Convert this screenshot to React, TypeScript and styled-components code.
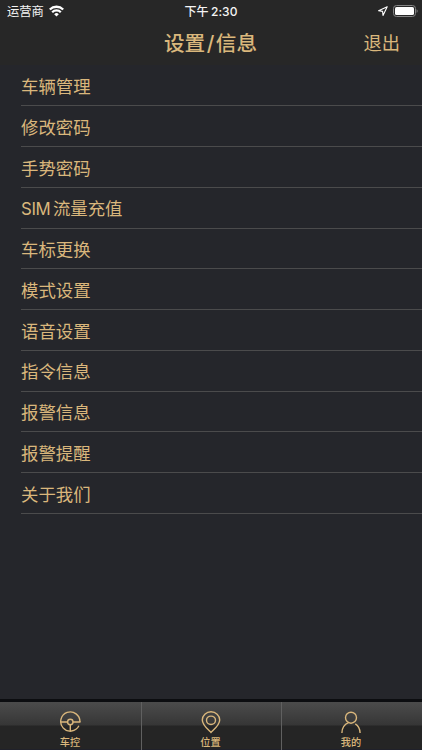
import React from "react";
import styled, { createGlobalStyle } from "styled-components";

const GOLD = "#dab77c";

const GlobalStyle = createGlobalStyle`
  * { box-sizing: border-box; }
  html, body { margin: 0; background: #242529; }
  body { font-family: Inter, "Noto Sans CJK SC", sans-serif; }
`;

const Screen = styled.div`
  width: 422px;
  height: 750px;
  display: flex;
  flex-direction: column;
  overflow: hidden;
  background: #25262b;
  color: ${GOLD};
`;

const StatusBar = styled.div`
  height: 22px;
  flex: none;
  display: grid;
  grid-template-columns: 1fr auto 1fr;
  align-items: center;
  padding: 1px 4px 0 7px;
  background: #272727;
  color: #f4f4f4;
  font-size: 12.3px;
  line-height: 21px;
  white-space: nowrap;
`;

const StatusSide = styled.div<{ $end?: boolean }>`
  display: flex;
  align-items: center;
  justify-content: ${(p) => (p.$end ? "flex-end" : "flex-start")};
  gap: 5px;

  svg { margin-bottom: 1px; }
`;

const Clock = styled.div`
  margin-right: 3px;
  font-weight: 500;
  font-size: 12px;
  letter-spacing: 0.1px;
  word-spacing: -1px;
`;

const NavBar = styled.header`
  height: 43px;
  flex: none;
  display: grid;
  grid-template-columns: 1fr auto 1fr;
  align-items: center;
  padding-right: 22px;
  background: #272727;
`;

const Title = styled.h1`
  grid-column: 2;
  margin: 0 0 0 21px;
  font-size: 20.6px;
  line-height: 43px;
  font-weight: 500;
`;

const Slash = styled.span`
  padding: 0 1.5px;
`;

const LogoutButton = styled.button`
  justify-self: end;
  padding: 0;
  border: 0;
  background: none;
  color: inherit;
  font: 400 18.3px/43px Inter, "Noto Sans CJK SC", sans-serif;
`;

const Menu = styled.ul`
  flex: 1;
  margin: 0;
  padding: 0.7px 0 0 21px;
  list-style: none;
`;

const MenuItem = styled.li`
  height: 40.75px;
  display: flex;
  align-items: center;
  padding-top: 3px;
  border-bottom: 1px solid #4b4b4c;
  font-size: 17.4px;
  line-height: 24px;
`;

const Latin = styled.span`
  margin-right: 2.5px;
  font-size: 16.8px;
  letter-spacing: -0.35px;
`;

const TabBar = styled.nav`
  height: 51px;
  flex: none;
  display: grid;
  grid-template-columns: 141px 140px 141px;
  border-top: 3px solid #0c0d10;
  border-bottom: 1px solid #20212a;
  background: linear-gradient(#4b4b4b 0, #484848 4px, #363636 23px, #252525 24px, #252525 100%);
`;

const Tab = styled.div`
  display: flex;
  flex-direction: column;
  align-items: center;
  padding: 8px 1px 0 0;
  font-size: 10.2px;
  line-height: 16px;
  font-weight: 500;

  & + & {
    padding-right: 2px;
    border-left: 1px solid #606060;
  }
`;

const TabIcon = styled.svg`
  width: 24px;
  height: 24px;
  flex: none;
  fill: none;
  stroke: ${GOLD};
  stroke-width: 1.4;
`;

const items: React.ReactNode[] = [
  "车辆管理", "修改密码", "手势密码", <><Latin>SIM</Latin>流量充值</>, "车标更换", "模式设置",
  "语音设置", "指令信息", "报警信息", "报警提醒", "关于我们",
];

const WifiIcon = () => (
  <svg width="15" height="12" viewBox="0 0 15 12" fill="none" stroke="#fff" strokeWidth="2.3">
    <path d="M.8 4.5a9.5 9.5 0 0 1 13.4 0M3.2 7.2a6.1 6.1 0 0 1 8.6 0" />
    <path d="M7.5 11.5 5.2 9.2a3.2 3.2 0 0 1 4.6 0Z" fill="#fff" stroke="none" />
  </svg>
);

const LocationIcon = () => (
  <svg width="10" height="10" viewBox="0 0 10 10" fill="none" stroke="#fff" strokeWidth="1.1" strokeLinejoin="round">
    <path d="M9.2.7.6 4.8l4 .6.4 4Z" />
  </svg>
);

const BatteryIcon = () => (
  <svg width="25" height="12" viewBox="0 0 25 12">
    <rect x=".5" y=".5" width="22" height="11" rx="3" fill="none" stroke="#858585" />
    <rect x="2" y="2" width="19" height="8" rx="1.6" fill="#fff" />
    <path d="M23.6 4.2c1.4.4 1.4 3.2 0 3.6Z" fill="#858585" />
  </svg>
);

const WheelIcon = () => (
  <TabIcon viewBox="0 0 24 24">
    <path d="M21.9 12A9.6 9.6 0 1 0 20.9 15.8" />
    <circle cx="12.3" cy="12" r="2.7" />
    <path d="M2.7 12h6.9M15 12h7.5M12.3 14.7v7" />
  </TabIcon>
);

const PinIcon = () => (
  <TabIcon viewBox="0 0 24 24">
    <path d="M12 22.4C9.6 20 3.3 15.2 3.3 10a8.7 8.2 0 0 1 17.4 0c0 5.2-6.3 10-8.7 12.4Z" />
    <ellipse cx="12" cy="10.3" rx="4.5" ry="4.2" />
  </TabIcon>
);

const PersonIcon = () => (
  <TabIcon viewBox="0 0 24 24">
    <circle cx="12" cy="7.7" r="5.5" />
    <path d="M2.9 23c.1-4.7 2.5-8.6 6.6-10.3M16.3 13.9c2.9 1.9 4.7 5.1 4.8 9.1" />
  </TabIcon>
);

export default function App() {
  return (
    <Screen>
      <GlobalStyle />
      <StatusBar>
        <StatusSide>运营商<WifiIcon /></StatusSide>
        <Clock>下午 2:30</Clock>
        <StatusSide $end><LocationIcon /><BatteryIcon /></StatusSide>
      </StatusBar>
      <NavBar>
        <Title>设置<Slash>/</Slash>信息</Title>
        <LogoutButton>退出</LogoutButton>
      </NavBar>
      <Menu>
        {items.map((label, index) => <MenuItem key={index}>{label}</MenuItem>)}
      </Menu>
      <TabBar>
        <Tab><WheelIcon />车控</Tab>
        <Tab><PinIcon />位置</Tab>
        <Tab><PersonIcon />我的</Tab>
      </TabBar>
    </Screen>
  );
}
